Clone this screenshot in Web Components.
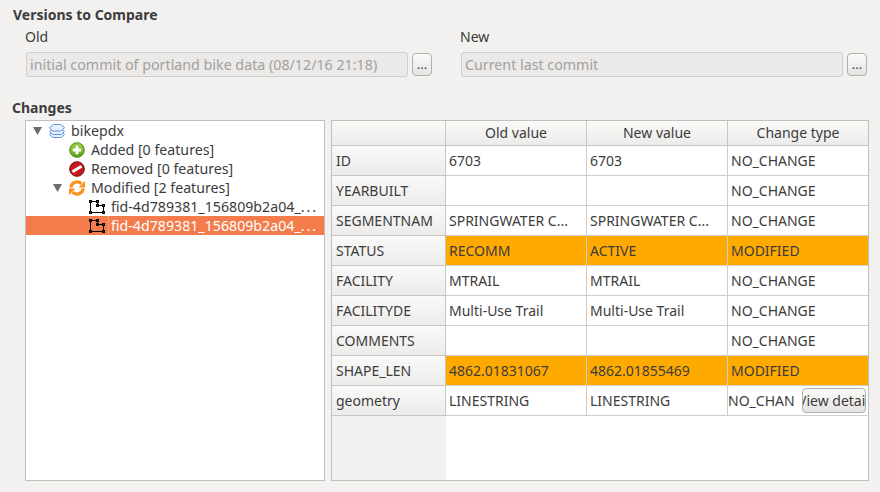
<!DOCTYPE html>
<html>
<head>
<meta charset="utf-8">
<style>
  html, body { margin: 0; height: 100%; }
  body {
    width: 880px; height: 492px; overflow: hidden; background: #f2f1f0; color: #3c3c3c;
    font: 14px "Noto Sans", "Open Sans", sans-serif;
    display: flex; flex-direction: column;
  }
</style>
</head>
<body>
<compare-panel></compare-panel>

<script>
const ICONS = {
  layers: `<svg width="16" height="16" viewBox="0 0 16 16"><g fill="#e6effb" stroke="#5f97e2" stroke-width="1"><path d="M3 9.500h10l2.500 2-3 3h-9l-3-3z"/><path d="M3 6.500h10l2.500 2-3 3h-9l-3-3z"/><path d="M4.500 1.500h7l4 3-3 3.500h-9l-3-3.500z"/></g></svg>`,
  added: `<svg width="16" height="16" viewBox="0 0 16 16"><defs><linearGradient id="g" x1="0" y1="0" x2="0" y2="1"><stop offset="0" stop-color="#a4d244"/><stop offset="1" stop-color="#58a018"/></linearGradient></defs><circle cx="8" cy="8" r="7.300" fill="url(#g)" stroke="#4c8a10"/><path d="M8 3.800v8.400M3.800 8h8.400" stroke="#fff" stroke-width="3"/></svg>`,
  removed: `<svg width="16" height="16" viewBox="0 0 16 16"><circle cx="8" cy="8" r="7.300" fill="#c8191d" stroke="#6e0d10"/><path d="M3.500 10.800l9-5.600" stroke="#fff" stroke-width="3"/></svg>`,
  modified: `<svg width="16" height="16" viewBox="0 0 16 16"><g fill="none" stroke="#f7931e" stroke-width="3.200"><path d="M1.800 7.500A6.300 6.300 0 0 1 12.500 3.800"/><path d="M14.200 8.500A6.300 6.300 0 0 1 3.500 12.200"/></g><path d="M16 1v6.500h-6.500zM0 15v-6.500h6.500z" fill="#f7931e"/></svg>`,
  polygon: `<svg width="16" height="16" viewBox="0 0 16 16"><path d="M1.500 2.500h7v4h6v7h-13z" fill="none" stroke="#000"/><g fill="none" stroke="#000"><rect x=".5" y="1.500" width="2" height="2"/><rect x="7.500" y="1.500" width="2" height="2"/><rect x="7.500" y="5.500" width="2" height="2"/><rect x="13.500" y="5.500" width="2" height="2"/><rect x=".5" y="12.500" width="2" height="2"/><rect x="13.500" y="12.500" width="2" height="2"/></g></svg>`
};

class GroupTitle extends HTMLElement {
  constructor() {
    super();
    this.attachShadow({mode: 'open'}).innerHTML = `
      <style>
        :host { display: block; font-weight: 700; font-size: 14px; line-height: 18px; }
      </style>
      <slot></slot>`;
  }
}
customElements.define('group-title', GroupTitle);

class VersionPicker extends HTMLElement {
  constructor() {
    super();
    this.attachShadow({mode: 'open'}).innerHTML = `
      <style>
        :host { display: block; }
        .label { line-height: 18px; height: 18px; margin-bottom: 6px; }
        .row { display: flex; align-items: center; gap: 4px; }
        .field {
          flex: 1; height: 25px; box-sizing: border-box; border: 1px solid #cfcdca; border-radius: 3px; margin-left: 1px;
          background: #ebeae9; color: #a3a09c; padding: 0 3px; line-height: 23px; white-space: nowrap; overflow: hidden;
          font-size: 14.250px;
        }
        .more {
          width: 20px; height: 23px; box-sizing: border-box; border: 1px solid #b3b0ac; border-radius: 4px;
          background: linear-gradient(#fbfbfa, #e6e4e2); color: #3c3c3c; font-size: 13px; line-height: 21px; text-align: center;
        }
      </style>
      <div class="label">${ this.getAttribute('label') }</div>
      <div class="row">
        <div class="field">${ this.getAttribute('value') }</div>
        <div class="more">...</div>
      </div>`;
  }
}
customElements.define('version-picker', VersionPicker);

class TreeRow extends HTMLElement {
  constructor() {
    super();
    const depth = Number(this.getAttribute('depth') || 0);
    const arrow = this.hasAttribute('open') ? '<svg width="10" height="8" viewBox="0 0 10 8"><path d="M0 0h9L4.500 8z" fill="#6b6b6b"/></svg>' : '';
    this.attachShadow({mode: 'open'}).innerHTML = `
      <style>
        :host { display: flex; align-items: center; height: 19px; line-height: 19px; white-space: nowrap; padding-left: ${ 7 + depth * 20 }px; font-size: 14.200px; }
        :host([selected]) { background: #f47c4c; color: #fff; }
        .arrow { width: 16px; height: 19px; display: flex; align-items: center; flex: none; }
        .icon { width: 16px; height: 16px; margin-right: 6px; flex: none; }
        .icon svg { display: block; }
        .text { flex: 1; min-width: 0; }
        :host([selected]) .icon { margin-right: 3px; }
        :host([selected]) .text { border-left: 1px dotted #f9c2aa; padding-left: 2px; }
      </style>
      <span class="arrow">${ arrow }</span>
      <span class="icon">${ ICONS[this.getAttribute('icon')] }</span>
      <span class="text"><slot></slot></span>`;
  }
}
customElements.define('tree-row', TreeRow);

class ChangesTree extends HTMLElement {
  constructor() {
    super();
    this.attachShadow({mode: 'open'}).innerHTML = `
      <style>
        :host { display: block; box-sizing: border-box; width: 300px; height: 361px; border: 1px solid #c2bfbb; background: #fff; }
      </style>
      <slot></slot>`;
  }
}
customElements.define('changes-tree', ChangesTree);

const ROWS = [
  ['ID', '6703', '6703', 'NO_CHANGE'],
  ['YEARBUILT', '', '', 'NO_CHANGE'],
  ['SEGMENTNAM', 'SPRINGWATER C...', 'SPRINGWATER C...', 'NO_CHANGE'],
  ['STATUS', 'RECOMM', 'ACTIVE', 'MODIFIED'],
  ['FACILITY', 'MTRAIL', 'MTRAIL', 'NO_CHANGE'],
  ['FACILITYDE', 'Multi-Use Trail', 'Multi-Use Trail', 'NO_CHANGE'],
  ['COMMENTS', '', '', 'NO_CHANGE'],
  ['SHAPE_LEN', '4862.01831067', '4862.01855469', 'MODIFIED'],
  ['geometry', 'LINESTRING', 'LINESTRING', 'NO_CHAN']
];

class DiffTable extends HTMLElement {
  constructor() {
    super();
    const body = ROWS.map((row) => {
      const changed = row[3] === 'MODIFIED' ? ' changed' : '';
      const button = row[0] === 'geometry' ? '<div class="details"><span>View details</span></div>' : '';
      return `
        <div class="head side">${ row[0] }</div>
        <div class="cell${ changed }">${ row[1] }</div>
        <div class="cell${ changed }">${ row[2] }</div>
        <div class="cell${ changed }${ button ? ' tight' : '' }">${ row[3] }${ button }</div>`;
    }).join('');
    this.attachShadow({mode: 'open'}).innerHTML = `
      <style>
        :host { display: block; box-sizing: border-box; width: 538px; height: 361px; border: 1px solid #c2bfbb; background: #fff; position: relative; }
        .grid { display: grid; grid-template-columns: 114px 141px 141px 140px; grid-template-rows: 25px repeat(9, 30px); height: 100%; }
        .head {
          background: linear-gradient(#fafaf9, #ecebe9); border-right: 1px solid #c8c6c3; border-bottom: 1px solid #c8c6c3;
          text-align: center; line-height: 24px; box-sizing: border-box;
        }
        .head.side { text-align: left; padding-left: 4px; line-height: 29px; }
        .cell {
          border-right: 1px solid #d0cecb; border-bottom: 1px solid #d0cecb; box-sizing: border-box;
          padding-left: 3px; line-height: 29px; white-space: nowrap; overflow: hidden; position: relative;
        }
        .cell:nth-child(4n) { border-right: 0; }
        .changed { background: #ffaa00; }
        .tight { padding-left: 0; }
        .details {
          position: absolute; left: 74px; top: 2px; width: 64px; height: 25px; box-sizing: border-box;
          border: 1px solid #b3b0ac; border-radius: 4px; background: linear-gradient(#fbfbfa, #e6e4e2);
          display: flex; overflow: hidden; line-height: 23px;
        }
        .details span { flex: none; margin-left: -5px; }
        .rest { position: absolute; left: 0; top: 295px; bottom: 0; width: 114px; background: #f2f1f0; }
      </style>
      <div class="grid">
        <div class="head"></div>
        <div class="head">Old value</div>
        <div class="head">New value</div>
        <div class="head" style="border-right:0">Change type</div>
        ${ body }
      </div>
      <div class="rest"></div>`;
  }
}
customElements.define('diff-table', DiffTable);

class ComparePanel extends HTMLElement {
  constructor() {
    super();
    this.attachShadow({mode: 'open'}).innerHTML = `
      <style>
        :host { display: block; padding: 6px 0 0 13px; }
        .versions { display: flex; padding: 4px 0 0 12px; gap: 28px; }
        version-picker { width: 407px; }
        group-title.changes { margin: 22px 0 3px -1px; }
        .split { display: flex; gap: 6px; margin-left: 12px; }
        .dots { letter-spacing: 2px; }
      </style>
      <group-title>Versions to Compare</group-title>
      <div class="versions">
        <version-picker label="Old" value="initial commit of portland bike data (08/12/16 21:18)"></version-picker>
        <version-picker label="New" value="Current last commit"></version-picker>
      </div>
      <group-title class="changes">Changes</group-title>
      <div class="split">
        <changes-tree>
          <tree-row icon="layers" open>bikepdx</tree-row>
          <tree-row icon="added" depth="1">Added [0 features]</tree-row>
          <tree-row icon="removed" depth="1">Removed [0 features]</tree-row>
          <tree-row icon="modified" depth="1" open>Modified [2 features]</tree-row>
          <tree-row icon="polygon" depth="2">fid-4d789381_156809b2a04_<span class="dots">...</span></tree-row>
          <tree-row icon="polygon" depth="2" selected>fid-4d789381_156809b2a04_<span class="dots">...</span></tree-row>
        </changes-tree>
        <diff-table></diff-table>
      </div>`;
  }
}
customElements.define('compare-panel', ComparePanel);
</script>
</body>
</html>
